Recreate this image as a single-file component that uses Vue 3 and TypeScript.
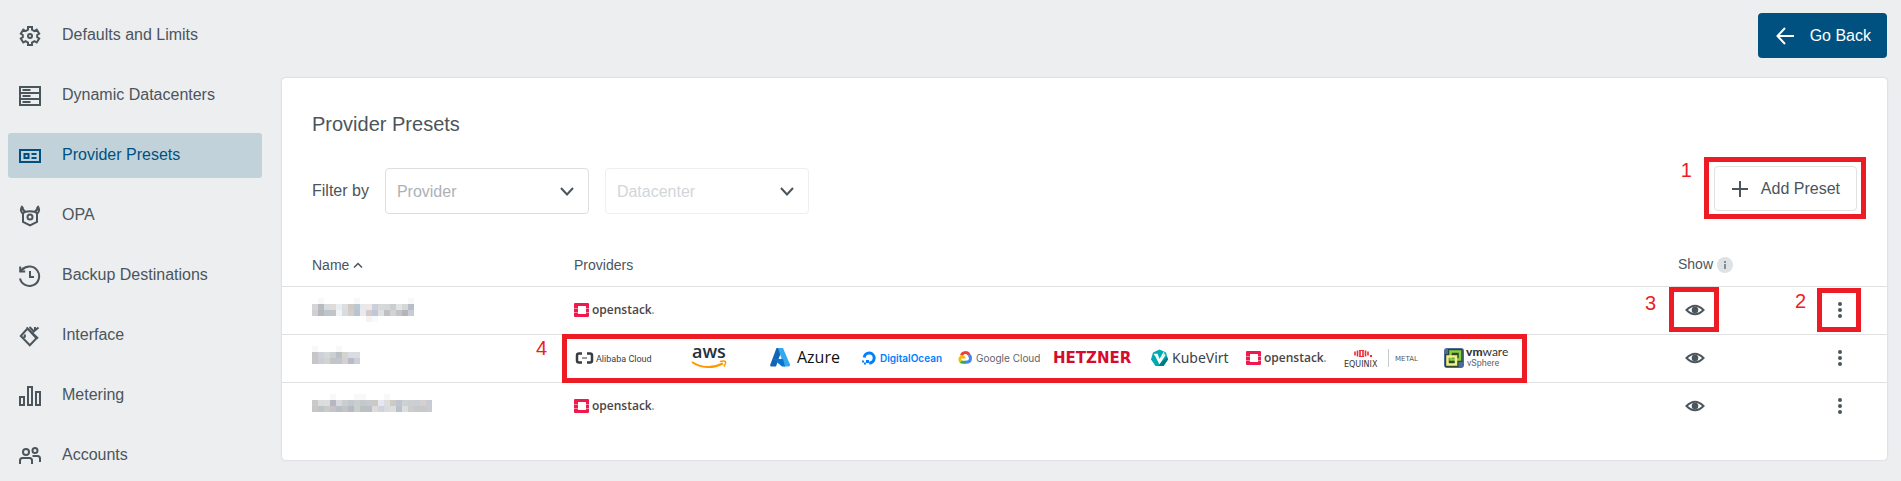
<script setup lang="ts">
import { ref } from 'vue'

interface NavItem {
  id: string
  label: string
}

interface Preset {
  id: number
  upper: string[]
  lower: string[]
  top: number[]
  bottom: number[]
  providers: string[]
}

const navItems: NavItem[] = [
  { id: 'defaults', label: 'Defaults and Limits' },
  { id: 'datacenters', label: 'Dynamic Datacenters' },
  { id: 'presets', label: 'Provider Presets' },
  { id: 'opa', label: 'OPA' },
  { id: 'backup', label: 'Backup Destinations' },
  { id: 'interface', label: 'Interface' },
  { id: 'metering', label: 'Metering' },
  { id: 'accounts', label: 'Accounts' },
]

const activeItem = ref('presets')
const provider = ref('')
const datacenter = ref('')

// Preset names are masked with a coarse mosaic of 6px cells.
const presets: Preset[] = [
  {
    id: 1,
    upper: ['#d5d5d6', '#b8bbbf', '#d5dbdf', '#dddcda', '#e9edf1', '#dcdfe2', '#d0cac4', '#bbc7d3', '#e7e8ec', '#eee7e7', '#cbd0da', '#d7d8da', '#d6d7d9', '#cccdcf', '#e1e4e5', '#d6d7d7', '#b8bdc8'],
    lower: ['#cfd0d1', '#b5b9bc', '#bfc6cb', '#c2c5c7', '#f0f4f7', '#d9dbdf', '#d3cec7', '#b9c4d0', '#e8eaee', '#d5ccca', '#c1c8d5', '#dfe0e2', '#bfc0bf', '#d2d3d7', '#c3c4c5', '#b5b5b9', '#c7cdd5'],
    top: [1, 7, 16],
    bottom: [9, 10],
    providers: ['openstack'],
  },
  {
    id: 2,
    upper: ['#c5c6c5', '#cfd1d8', '#d5d8d9', '#cccfd0', '#bac0c5', '#d4d3d0', '#d9dce0', '#d9dce0'],
    lower: ['#c5c6c5', '#cbcfd5', '#d1d3d3', '#c2c4c5', '#c0c6ce', '#d3d0cd', '#b7bcc8', '#ccd0d4'],
    top: [0, 4],
    bottom: [],
    providers: ['alibaba', 'aws', 'azure', 'digitalocean', 'gcp', 'hetzner', 'kubevirt', 'openstack', 'equinix', 'vsphere'],
  },
  {
    id: 3,
    upper: ['#c9cacb', '#dbdddd', '#dcdedd', '#b8b6bf', '#d8d9dd', '#cbcdcf', '#c1c8cf', '#caced1', '#c5c8c9', '#c7cace', '#cbc9c6', '#e3e8f0', '#dddddc', '#cecbc7', '#bfc5cd', '#cdd1d5', '#cdced0', '#cbcfd4', '#d3d0ce', '#c7ccd3'],
    lower: ['#cac7c3', '#bfc3ca', '#cacccb', '#c6c2c7', '#b8bfc7', '#c2c5c8', '#b8bac3', '#c9cecf', '#bcc0c1', '#b9c1c8', '#dddbd7', '#d1d3dc', '#d9dcdf', '#dfddd9', '#b9c1cd', '#dcdde0', '#cbccce', '#c7c8ca', '#c9c9cc', '#c9cbd0'],
    top: [3, 7, 8, 12],
    bottom: [],
    providers: ['openstack'],
  },
]
</script>

<template>
  <div class="page">
    <nav class="sidebar" aria-label="Administration">
      <a
        v-for="item in navItems"
        :key="item.id"
        href="#"
        class="nav-item"
        :class="{ active: item.id === activeItem }"
        @click.prevent="activeItem = item.id"
      >
        <svg class="nav-icon" viewBox="0 0 24 24" aria-hidden="true">
          <template v-if="item.id === 'defaults'">
            <path d="M10 3h4v2.600l2.400 1.400 2.300-1.300 2.500 4-2 1.300v2.200l2 1.300-2.500 4-2.300-1.300-2.400 1.400V21h-4v-2.400l-2.400-1.400-2.300 1.300-2.500-4 2-1.300V11l-2-1.300 2.500-4L7.600 7 10 5.600z" />
            <circle cx="12" cy="12" r="2" />
          </template>
          <template v-else-if="item.id === 'datacenters'">
            <path d="M2 3h20v18H2zM2 9h20M2 15h20M4.500 6h8M4.500 12h8M4.500 18h8" />
          </template>
          <template v-else-if="item.id === 'presets'">
            <path d="M2 6h20v12H2zM6.500 10h4v4h-4zM13.500 10h5M13.500 14h5" />
          </template>
          <template v-else-if="item.id === 'opa'">
            <path d="M5 9v9l7 3.500 7-3.500V9M5 9.500c2-3 12-3 14 0M4.500 2C2 5 3 8 5 10M19.500 2c2.500 3 1.500 6-.500 8M4.500 3c0 3 1 4 3 5M19.500 3c0 3-1 4-3 5" />
            <circle cx="12" cy="13" r="2.500" />
          </template>
          <template v-else-if="item.id === 'backup'">
            <path d="M2 14.500A9.700 9.700 0 1 0 4.500 5.500M2.200 2.500v5h5M2.500 7l3-3M12 7v6h4" />
          </template>
          <template v-else-if="item.id === 'interface'">
            <path d="M9.500 4.500 2.800 12l9 9.200 6.700-7zM8.500 3.500l11.500 11M11.500 3l4 4M14.500 8.500l6-5M17 3v4M4 13.500c3 .500 3.500-1 2.500-3" />
          </template>
          <template v-else-if="item.id === 'metering'">
            <path d="M2 13h4v8H2zM10 3h4v18h-4zM18 8h4v13h-4z" />
          </template>
          <template v-else>
            <path d="M2 20v-3.500q0-2.500 2.500-2.500h7q2.500 0 2.500 2.500V20M14.500 12h5q2.500 0 2.500 2.500V18" />
            <circle cx="8" cy="8" r="3" />
            <circle cx="17" cy="6.500" r="2.500" />
          </template>
        </svg>
        <span>{{ item.label }}</span>
      </a>
    </nav>

    <main class="content">
      <div class="actions">
        <button type="button" class="btn primary">
          <svg viewBox="0 0 18 18" aria-hidden="true"><path d="M9 1 1.500 9 9 17M1.500 9H18" /></svg>
          <span>Go Back</span>
        </button>
      </div>

      <section class="card">
        <h1>Provider Presets</h1>
        <div class="toolbar">
          <span class="filter-label">Filter by</span>
          <div class="select-box">
            <select v-model="provider" aria-label="Provider">
              <option value="">Provider</option>
            </select>
            <svg viewBox="0 0 14 9" aria-hidden="true"><path d="m1 1 6 6.500L13 1" /></svg>
          </div>
          <div class="select-box disabled">
            <select v-model="datacenter" aria-label="Datacenter" disabled>
              <option value="">Datacenter</option>
            </select>
            <svg viewBox="0 0 14 9" aria-hidden="true"><path d="m1 1 6 6.500L13 1" /></svg>
          </div>
          <div class="add-box">
            <button type="button" class="btn outline">
              <svg viewBox="0 0 18 18" aria-hidden="true"><path d="M9 1v16M1 9h16" /></svg>
              <span>Add Preset</span>
            </button>
            <span class="frame frame-add"></span>
            <span class="mark mark-add">1</span>
          </div>
        </div>

        <table>
          <colgroup>
            <col class="col-name" />
            <col />
            <col class="col-show" />
            <col class="col-menu" />
          </colgroup>
          <thead>
            <tr>
              <th scope="col" class="name">
                Name
                <svg class="sort" viewBox="0 0 10 6" aria-hidden="true"><path d="m1 5.500 4-4 4 4" /></svg>
              </th>
              <th scope="col">Providers</th>
              <th scope="col">
                Show
                <svg class="info" viewBox="0 0 16 16" aria-hidden="true">
                  <circle cx="8" cy="8" r="8" />
                  <path d="M7 4h2v2H7zM7 7h2v5H7z" />
                </svg>
              </th>
              <th scope="col" aria-label="Actions"></th>
            </tr>
          </thead>
          <tbody>
            <tr v-for="preset in presets" :key="preset.id">
              <td class="name">
                <svg class="mask" viewBox="0 0 126 24" aria-hidden="true" shape-rendering="crispEdges">
                  <rect v-for="i in preset.top" :key="'t' + i" :x="i * 6" y="0" width="6" height="6" fill="#f7f8f9" />
                  <rect v-for="(c, i) in preset.upper" :key="'u' + i" :x="i * 6" y="6" width="6" height="6" :fill="c" />
                  <rect v-for="(c, i) in preset.lower" :key="'l' + i" :x="i * 6" y="12" width="6" height="6" :fill="c" />
                  <rect v-for="i in preset.bottom" :key="'b' + i" :x="i * 6" y="18" width="6" height="6" :fill="i === 9 ? '#f7f2f0' : '#f5fbff'" />
                </svg>
              </td>
              <td class="providers-cell">
                <div class="providers">
                  <svg v-for="p in preset.providers" :key="p" class="logo" viewBox="0 0 80 24" role="img" :aria-label="p">
                    <g v-if="p === 'openstack'">
                      <path fill="#f0194b" d="M2 5h12q1 0 1 1v4h-3V8H4v2H0V6q0-1 1-1zM0 11h4v3H0zM12 11h3v3h-3zM0 15h4v1h8v-1h3v3q0 1-1 1H1q-1 0-1-1z" />
                      <path fill="#f8879f" d="M0 10h4v1H0zM12 10h3v1h-3zM0 14h4v1H0zM12 14h3v1h-3z" />
                      <text x="18" y="16" class="t-openstack">openstack</text>
                      <circle cx="79" cy="15" r="1" fill="#aaa5a3" />
                    </g>
                    <g v-else-if="p === 'alibaba'">
                      <path fill="none" stroke="#373d41" stroke-width="2.500" d="M8 7.500H5Q3 7.500 3 9.500v5q0 2 2 2h3M13 7.500h3q2 0 2 2v5q0 2-2 2h-3" />
                      <path fill="#373d41" d="M8 11.500h5v1H8z" />
                      <text x="22" y="16" class="t-alibaba">Alibaba Cloud</text>
                    </g>
                    <g v-else-if="p === 'aws'">
                      <text x="22" y="12" class="t-aws">aws</text>
                      <path fill="none" stroke="#f90" stroke-width="2" d="M22 16c9 6.500 21 6.500 31 1.500" />
                      <path fill="none" stroke="#f90" stroke-width="1.500" d="M50 15.500c6-1.500 7 0 4 5" />
                    </g>
                    <g v-else-if="p === 'azure'">
                      <path fill="#1464b4" d="M10.500 2h6L10 20.500H5.500q-2 0-1-2.500z" />
                      <path fill="#36a9ee" d="M12 2h5l7 16.500q.500 2-1.500 2H18z" />
                      <path fill="#0875cf" d="M7 13h10l2 7.500h-3z" />
                      <text x="31" y="17" class="t-azure">Azure</text>
                    </g>
                    <g v-else-if="p === 'digitalocean'">
                      <path fill="none" stroke="#0080ff" stroke-width="3" d="M2.200 11.500a5 5 0 1 1 5 5.500" />
                      <path fill="#0080ff" d="M4 14h3v3H4zM2 16.500h2v2H2zM0 14.500h2v2H0z" />
                      <text x="18" y="16" class="t-do">DigitalOcean</text>
                    </g>
                    <g v-else-if="p === 'gcp'">
                      <path fill="none" stroke="#ea4335" stroke-width="3" d="M3.500 9.500a4 4 0 0 1 7.500-.500" />
                      <path fill="none" stroke="#4285f4" stroke-width="3" d="M10.500 9q2 .700 2 3.200 0 4-5 4" />
                      <path fill="none" stroke="#34a853" stroke-width="3" d="M8 16.300H5q-1.500 0-2.500-.800" />
                      <path fill="none" stroke="#fbbc05" stroke-width="3" d="M3 15.800q-2.500-3 .500-5 2-.500 3 1.700" />
                      <text x="18" y="16" class="t-gcp">Google Cloud</text>
                    </g>
                    <g v-else-if="p === 'hetzner'">
                      <text x="-1" y="17" class="t-hetzner">HETZNER</text>
                    </g>
                    <g v-else-if="p === 'kubevirt'">
                      <path fill="#00aab2" d="m9.500 3.500 6.500 3 2 7-4.500 6.500h-8L1 13.500l2-7z" />
                      <path fill="#00797f" d="M17 11l1 2.500-4.500 6.500h-5L9.500 18z" />
                      <path fill="none" stroke="#fff" stroke-width="1.500" d="M4 8.500h3l2.500 6 4.500-8M5.500 9l4 8L15 8.500" />
                      <text x="22" y="17" class="t-kubevirt">KubeVirt</text>
                    </g>
                    <g v-else-if="p === 'equinix'">
                      <path fill="none" stroke="#ed2b36" stroke-width="1.600" d="M13 5.500v4M15.500 4.500v6M18 4v7M21 4v7M23.500 4.500v6M26 5.500v4" />
                      <path fill="#ed2b36" d="M17 4h5v1h-5zM17 10h5v1h-5zM28 9h2v2h-2z" />
                      <text x="2" y="21" class="t-equinix">EQUINIX</text>
                      <path stroke="#c8cacc" d="M46.500 3v18" />
                      <text x="53" y="15" class="t-metal">METAL</text>
                    </g>
                    <g v-else>
                      <rect x="6" y="2" width="20" height="20" rx="3" fill="#4c6a9c" />
                      <path fill="none" stroke="#2f4630" stroke-width="5" d="M12.500 5.500H22v8h-9.500zM9.500 10.500H18v8H9.500z" />
                      <path fill="none" stroke="#8bd13c" stroke-width="2.500" d="M12.500 5.500H22v8h-9.500z" />
                      <path fill="none" stroke="#f2f08a" stroke-width="2.500" d="M9.500 10.500H18v8H9.500z" />
                      <text x="28" y="10" class="t-vmware"><tspan class="t-vm">vm</tspan>ware</text>
                      <text x="29" y="20" class="t-vsphere">vSphere</text>
                    </g>
                  </svg>
                </div>
                <template v-if="preset.id === 2">
                  <span class="frame frame-providers"></span>
                  <span class="mark mark-providers">4</span>
                </template>
              </td>
              <td>
                <div class="tool">
                  <button type="button" class="icon-btn" aria-label="Toggle visibility">
                    <svg viewBox="0 0 20 12" aria-hidden="true">
                      <path class="eye-line" d="M1.500 6Q10-2.500 18.500 6 10 14.500 1.500 6z" />
                      <circle cx="10" cy="6" r="3.300" />
                    </svg>
                  </button>
                  <template v-if="preset.id === 1">
                    <span class="frame frame-show"></span>
                    <span class="mark mark-show">3</span>
                  </template>
                </div>
              </td>
              <td>
                <div class="tool menu">
                  <button type="button" class="icon-btn" aria-label="More actions">
                    <svg viewBox="0 0 20 18" aria-hidden="true">
                      <circle cx="10" cy="3" r="2" />
                      <circle cx="10" cy="9" r="2" />
                      <circle cx="10" cy="15" r="2" />
                    </svg>
                  </button>
                  <template v-if="preset.id === 1">
                    <span class="frame frame-menu"></span>
                    <span class="mark mark-menu">2</span>
                  </template>
                </div>
              </td>
            </tr>
          </tbody>
        </table>
      </section>
    </main>
  </div>
</template>

<style>
body {
  margin: 0;
  background: #edeef0;
}
</style>

<style scoped>
.page {
  display: flex;
  align-items: flex-start;
  font-family: "Liberation Sans", Arial, sans-serif;
  font-size: 16px;
  color: #4b555c;
}

.sidebar {
  display: flex;
  flex-direction: column;
  flex: none;
  gap: 15px;
  width: 254px;
  padding: 13px 8px 0;
}

.nav-item {
  display: flex;
  align-items: center;
  gap: 20px;
  height: 45px;
  padding-left: 10px;
  border-radius: 3px;
  color: inherit;
  text-decoration: none;
}

.nav-item span {
  padding-bottom: 2px;
}

.nav-item.active {
  background: #c2d2da;
  color: #005180;
}

.nav-icon {
  width: 24px;
  height: 24px;
  margin-top: 1px;
  fill: none;
  stroke: currentColor;
  stroke-width: 2;
}

.content {
  flex: 1;
  min-width: 0;
  padding: 13px 14px 20px 12px;
}

.actions {
  display: flex;
  justify-content: flex-end;
  margin-bottom: 20px;
}

.btn {
  display: flex;
  align-items: center;
  gap: 16px;
  height: 45px;
  padding: 0 16px 0 18px;
  border: 0;
  border-radius: 4px;
  font: inherit;
  white-space: nowrap;
}

.btn svg {
  width: 18px;
  height: 18px;
  fill: none;
  stroke: currentColor;
  stroke-width: 2;
}

.primary {
  background: #005180;
  color: #fff;
}

.outline {
  gap: 12px;
  padding: 0 16px;
  border: 1px solid #dfe1e3;
  background: #fff;
  color: inherit;
}

.card {
  padding: 34px 0 29px;
  border-radius: 4px;
  background: #fff;
  box-shadow: 0 0 2px rgba(60, 70, 80, 0.25);
}

h1 {
  margin: 0 30px 30px;
  font-size: 20px;
  font-weight: 400;
  line-height: 24px;
}

.toolbar {
  display: flex;
  align-items: center;
  gap: 16px;
  margin: 0 30px 27px;
}

.select-box {
  position: relative;
  width: 204px;
}

.select-box select {
  appearance: none;
  display: block;
  width: 100%;
  height: 46px;
  padding: 0 40px 0 11px;
  border: 1px solid #dcdfe1;
  border-radius: 4px;
  background: #fff;
  color: #adb1b5;
  font: inherit;
  opacity: 1;
}

.select-box.disabled select {
  border-color: #eeeff0;
  color: #d2d6d9;
}

.select-box svg {
  position: absolute;
  top: 19px;
  right: 15px;
  width: 14px;
  height: 9px;
  fill: none;
  stroke: #4b555c;
  stroke-width: 2;
  pointer-events: none;
}

.add-box {
  position: relative;
  margin-bottom: 5px;
  margin-left: auto;
}

table {
  width: 100%;
  table-layout: fixed;
  border-collapse: separate;
  border-spacing: 0;
}

.col-name {
  width: 292px;
}

.col-show {
  width: 115px;
}

.col-menu {
  width: 94px;
}

th,
td {
  box-sizing: border-box;
  height: 48px;
  padding: 0 0 1px;
  border-bottom: 1px solid #dfe1e3;
  text-align: left;
}

th {
  height: 44px;
  padding: 0;
  font-size: 14px;
  font-weight: 400;
}

tbody tr:last-child td {
  border-bottom: 0;
  padding-bottom: 2px;
}

.name {
  padding-left: 30px;
}

.sort {
  width: 10px;
  height: 6px;
  margin-bottom: 2px;
  fill: none;
  stroke: currentColor;
  stroke-width: 1.5;
}

.info {
  width: 16px;
  height: 16px;
  vertical-align: -4px;
}

.info circle {
  fill: #dee2e5;
}

.info path {
  fill: #858b93;
}

.mask {
  display: block;
  width: 126px;
  height: 24px;
}

.providers-cell {
  position: relative;
}

.providers {
  display: flex;
  gap: 16px;
}

.logo {
  flex: none;
  width: 80px;
  height: 24px;
  overflow: visible;
}

.t-openstack {
  font: 600 12px "Open Sans", sans-serif;
  fill: #4b4543;
}

.t-alibaba {
  font: 400 9px Roboto, sans-serif;
  fill: #373d41;
}

.t-aws {
  font: 600 18px "Open Sans", sans-serif;
  fill: #252f3e;
}

.t-azure {
  font: 400 16px "Open Sans", sans-serif;
  fill: #111;
}

.t-do {
  font: 600 10px Inter, sans-serif;
  fill: #0080ff;
}

.t-gcp {
  font: 400 10px Inter, sans-serif;
  fill: #5f6368;
}

.t-hetzner {
  font: 700 15px "DejaVu Sans", sans-serif;
  fill: #d50c2d;
}

.t-kubevirt {
  font: 400 14px "Noto Sans", sans-serif;
  fill: #3a4249;
}

.t-equinix {
  font: 400 8px "DejaVu Sans", sans-serif;
  fill: #333;
}

.t-metal {
  font: 400 7px "DejaVu Sans", sans-serif;
  fill: #55585b;
}

.t-vmware {
  font: 400 12px Lato, sans-serif;
  fill: #333;
}

.t-vm {
  font-weight: 900;
}

.t-vsphere {
  font: 400 9px Roboto, sans-serif;
  fill: #666;
}

.tool {
  position: relative;
  width: 34px;
}

.tool.menu {
  margin: 0 auto;
}

.icon-btn {
  display: flex;
  align-items: center;
  justify-content: center;
  width: 34px;
  height: 34px;
  padding: 0;
  border: 0;
  background: none;
  color: inherit;
}

.icon-btn svg {
  width: 20px;
  fill: currentColor;
}

.eye-line {
  fill: none;
  stroke: currentColor;
  stroke-width: 2;
}

/* Numbered callouts lie over the page. */
.frame {
  position: absolute;
  z-index: 1;
  border: 5px solid #ed1c24;
  pointer-events: none;
}

.mark {
  position: absolute;
  z-index: 1;
  color: #ed1c24;
  font-size: 20px;
  line-height: 20px;
}

.frame-add {
  inset: -9px -9px -8px -10px;
}

.mark-add {
  top: -6px;
  left: -33px;
}

.frame-providers {
  top: -1px;
  bottom: -1px;
  left: -12px;
  width: 955px;
}

.mark-providers {
  top: 3px;
  left: -38px;
}

.frame-show {
  inset: -6px -7px -5px -9px;
}

.mark-show {
  top: 0;
  left: -33px;
}

.frame-menu {
  inset: -5px -4px -5px -6px;
}

.mark-menu {
  top: -2px;
  left: -28px;
}
</style>
